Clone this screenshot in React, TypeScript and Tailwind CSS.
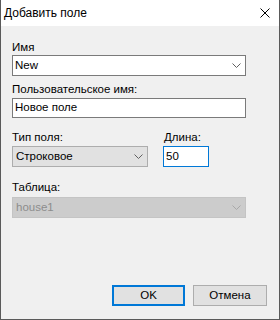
import React from 'react';

const Chevron: React.FC<{ color?: string }> = ({ color = '#606060' }) => (
  <svg width="9" height="5" viewBox="0 0 9 5" className="block">
    <path d="M0.5 0.5 L4.5 4.5 L8.5 0.5" fill="none" stroke={color} strokeWidth="1" />
  </svg>
);

const Label: React.FC<{ children: React.ReactNode; className?: string }> = ({ children, className = '' }) => (
  <div className={`h-[14px] leading-[14px] text-[11.5px] text-black ${className}`}>{children}</div>
);

export default function App() {
  return (
    <div
      className="w-[280px] h-[320px] flex flex-col bg-[#f0f0f0] border-x border-b border-[#5a5a5a] overflow-hidden"
      style={{ fontFamily: '"Liberation Sans", Arial, sans-serif' }}
    >
      {/* Title bar */}
      <div className="h-[26px] shrink-0 bg-white flex items-center justify-between pl-[3px] pr-[9px]">
        <span className="text-[12px] text-black leading-none">Добавить поле</span>
        <svg width="10" height="10" viewBox="0 0 10 10">
          <path d="M0.5 0.5 L9.5 9.5 M9.5 0.5 L0.5 9.5" stroke="#000" strokeWidth="1" />
        </svg>
      </div>

      <div className="flex-1 flex flex-col pl-[11px] pr-[33px]">
        {/* Имя */}
        <Label className="mt-[14px]">Имя</Label>
        <div className="mt-[1px] h-[21px] bg-white border border-[#7a7a7a] flex items-center justify-between pl-[2px] pr-[4px]">
          <span className="text-[11.5px] text-black">New</span>
          <Chevron />
        </div>

        {/* Пользовательское имя */}
        <Label className="mt-[6px]">Пользовательское имя:</Label>
        <div className="mt-[2px] h-[20px] bg-white border border-[#7a7a7a] flex items-center pl-[2px]">
          <span className="text-[11.5px] text-black">Новое поле</span>
        </div>

        {/* Тип поля / Длина */}
        <div className="mt-[12px] flex gap-[15px]">
          <div className="w-[136px] flex flex-col">
            <Label>Тип поля:</Label>
            <div className="mt-[2px] h-[21px] bg-[#e1e1e1] border border-[#adadad] flex items-center justify-between pl-[3px] pr-[4px]">
              <span className="text-[11.5px] text-black">Строковое</span>
              <Chevron />
            </div>
          </div>
          <div className="w-[46px] flex flex-col">
            <Label className="pl-[1px]">Длина:</Label>
            <div className="mt-[2px] h-[21px] bg-white border border-[#0078d7] flex items-center pl-[2px]">
              <span className="text-[11.5px] text-black">50</span>
            </div>
          </div>
        </div>

        {/* Таблица */}
        <Label className="mt-[13px]">Таблица:</Label>
        <div className="mt-[3px] h-[21px] bg-[#cccccc] border border-[#c4c4c4] flex items-center justify-between pl-[3px] pr-[4px]">
          <span className="text-[11.5px] text-[#8d8d8d]">house1</span>
          <Chevron color="#a8a8a8" />
        </div>

        {/* Buttons */}
        <div className="mt-auto mb-[13px] flex justify-end gap-[8px] -mr-[21px]">
          <button className="w-[73px] h-[21px] bg-[#e1e1e1] border-2 border-[#0078d7] text-[11.5px] text-black leading-none">
            OK
          </button>
          <button className="w-[74px] h-[21px] bg-[#e1e1e1] border border-[#adadad] text-[11.5px] text-black leading-none">
            Отмена
          </button>
        </div>
      </div>
    </div>
  );
}
